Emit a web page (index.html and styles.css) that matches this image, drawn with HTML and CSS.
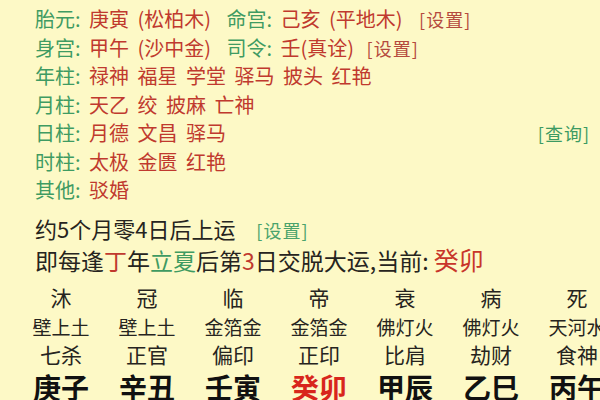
FILE: index.html
```html
<!DOCTYPE html>
<html lang="zh">
<head>
<meta charset="utf-8">
<link rel="stylesheet" href="styles.css">
</head>
<body>
<div class="page">
  <div class="info">
    <div class="row"><span class="lb">胎元:</span> <span class="rd">庚寅 (松柏木)</span> <span class="lb lb2">命宫:</span> <span class="rd">己亥 (平地木)</span> <span class="set set1">[设置]</span></div>
    <div class="row"><span class="lb">身宫:</span> <span class="rd">甲午 (沙中金)</span> <span class="lb lb2">司令:</span> <span class="rd">壬(真诠)</span> <span class="set">[设置]</span></div>
    <div class="row"><span class="lb">年柱:</span> <span class="rd">禄神 福星 学堂 驿马 披头 红艳</span></div>
    <div class="row"><span class="lb">月柱:</span> <span class="rd">天乙 绞 披麻 亡神</span></div>
    <div class="row row-q"><span><span class="lb">日柱:</span> <span class="rd">月德 文昌 驿马</span></span><span class="query">[查询]</span></div>
    <div class="row"><span class="lb">时柱:</span> <span class="rd">太极 金匮 红艳</span></div>
    <div class="row"><span class="lb">其他:</span> <span class="rd">驳婚</span></div>
  </div>
  <div class="luck">约5个月零4日后上运 <span class="set-g">[设置]</span></div>
  <div class="luck2">即每逢<span class="r">丁</span>年<span class="g">立夏</span>后第<span class="r">3</span>日交脱大运,当前: <span class="cur">癸卯</span></div>
  <div class="table">
    <div class="col"><div class="c1">沐</div><div class="c2">壁上土</div><div class="c3">七杀</div><div class="c4">庚子</div></div>
    <div class="col"><div class="c1">冠</div><div class="c2">壁上土</div><div class="c3">正官</div><div class="c4">辛丑</div></div>
    <div class="col"><div class="c1">临</div><div class="c2">金箔金</div><div class="c3">偏印</div><div class="c4">壬寅</div></div>
    <div class="col"><div class="c1">帝</div><div class="c2">金箔金</div><div class="c3">正印</div><div class="c4 red">癸卯</div></div>
    <div class="col"><div class="c1">衰</div><div class="c2">佛灯火</div><div class="c3">比肩</div><div class="c4">甲辰</div></div>
    <div class="col"><div class="c1">病</div><div class="c2">佛灯火</div><div class="c3">劫财</div><div class="c4">乙巳</div></div>
    <div class="col"><div class="c1">死</div><div class="c2">天河水</div><div class="c3">食神</div><div class="c4">丙午</div></div>
  </div>
</div>
</body>
</html>
```

FILE: styles.css
```css
html, body {
  margin: 0;
  padding: 0;
  background: #fdf9c6;
  width: 600px;
  height: 400px;
  overflow: hidden;
}
.page {
  font-family: "Noto Sans CJK SC", "Noto Sans", sans-serif;
  color: #262420;
  padding-top: 5px;
}
.info {
  padding-left: 35px;
  font-size: 20px;
  word-spacing: 4px;
}
.row {
  height: 28.5px;
  line-height: 28.5px;
  white-space: nowrap;
}
.row-q {
  display: flex;
  justify-content: space-between;
  padding-right: 10px;
}
.lb { color: #3f9b62; }
.lb2 { margin-left: 7px; }
.rd { color: #c0392e; }
.set {
  color: #b54a3e;
  font-size: 18px;
  letter-spacing: 1px;
  margin-left: 4px;
}
.set1 { margin-left: 8px; }
.query {
  color: #3c9a62;
  font-size: 18px;
  letter-spacing: 1px;
}
.luck {
  padding-left: 35px;
  margin-top: 7.5px;
  font-size: 22px;
  line-height: 32px;
  height: 32px;
  white-space: nowrap;
}
.set-g {
  color: #4aa36c;
  font-size: 18px;
  letter-spacing: 1px;
  margin-left: 16px;
}
.luck2 {
  padding-left: 35px;
  font-size: 23px;
  line-height: 31px;
  height: 31px;
  white-space: nowrap;
}
.r { color: #c0392e; }
.g { color: #3f9b62; }
.cur { color: #c8352a; font-size: 25px; }
.table {
  display: grid;
  grid-template-columns: repeat(7, 86px);
  padding-left: 18px;
  margin-top: 5px;
}
.col { text-align: center; white-space: nowrap; }
.c1 { font-size: 21px; line-height: 34px; }
.c2 { font-size: 19px; line-height: 26px; }
.c3 { font-size: 21px; line-height: 28px; }
.c4 { font-size: 28px; line-height: 38px; font-weight: bold; color: #111; }
.c4.red { color: #d8261c; }
```
